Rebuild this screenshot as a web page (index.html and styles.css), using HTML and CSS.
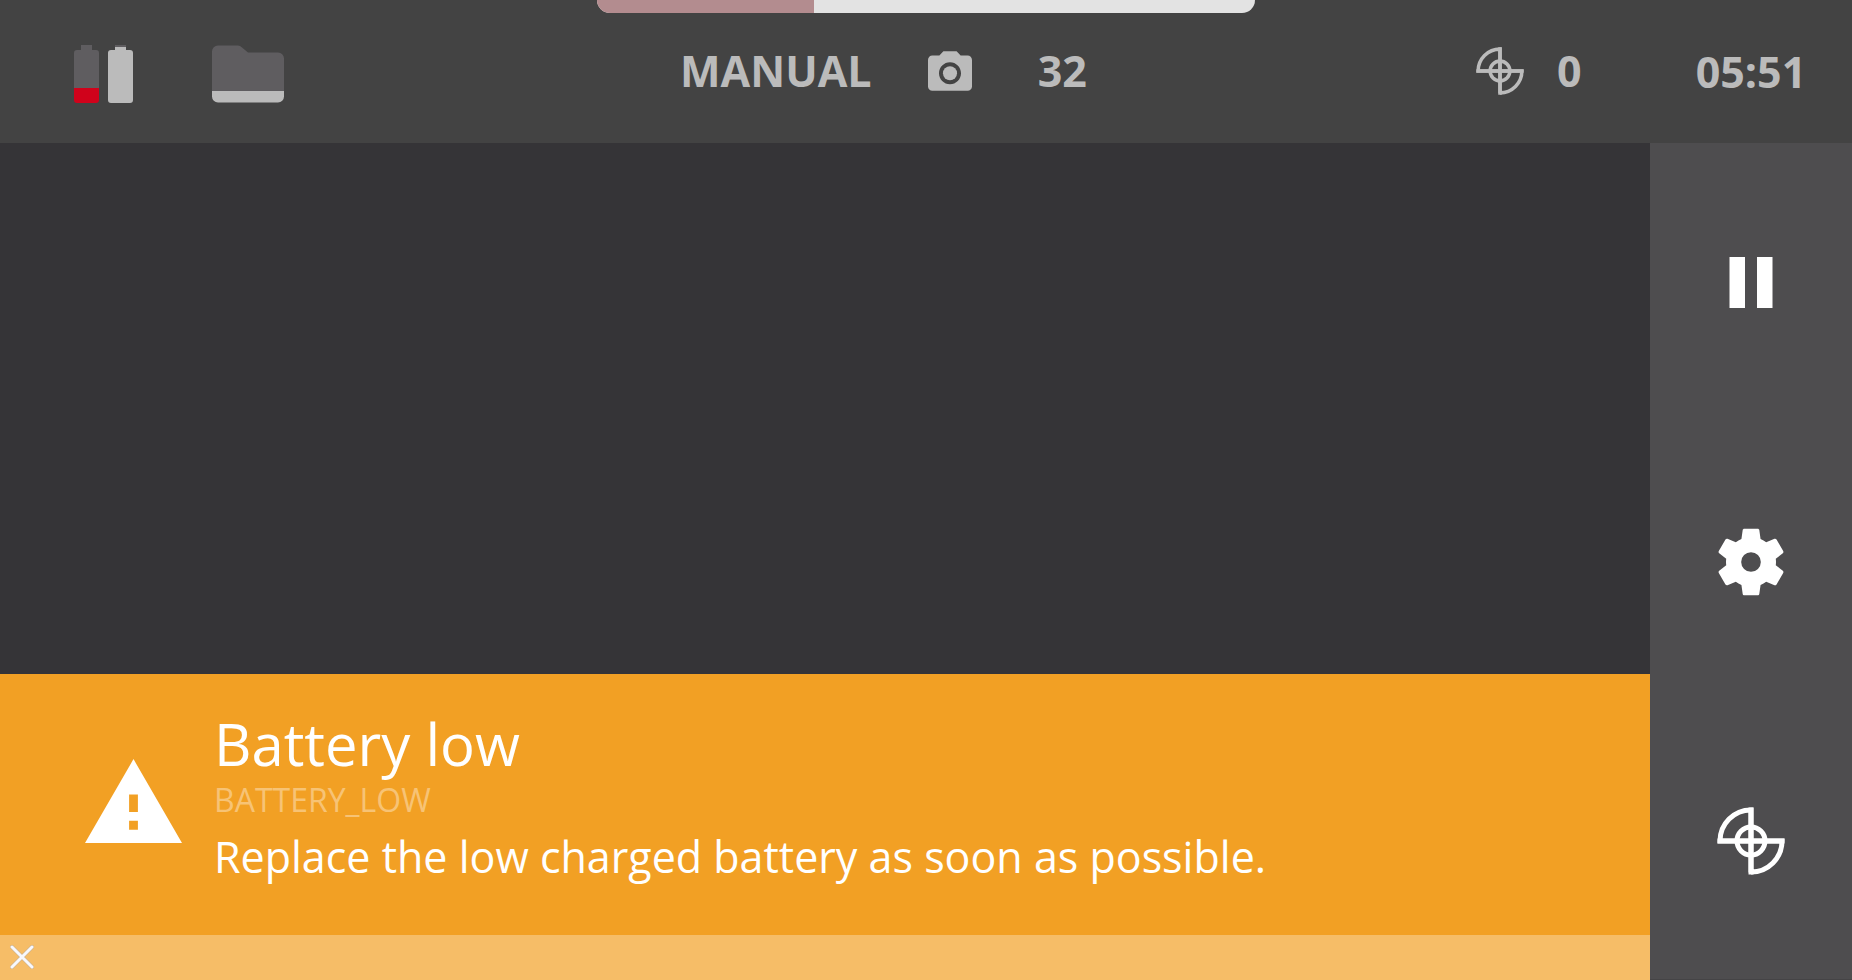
FILE: index.html
```html
<!DOCTYPE html>
<html lang="en">
<head>
<meta charset="utf-8">
<title>Camera control</title>
<link rel="stylesheet" href="styles.css">
</head>
<body>
<div class="app">
  <header class="topbar">
    <div class="storage">
      <svg class="batteries" viewBox="0 0 59 58" role="img" aria-label="Batteries">
        <path fill="#5f5d60" d="M7 0h11v5h4a3 3 0 0 1 3 3v36H0V8a3 3 0 0 1 3-3h4z"/>
        <path fill="#d0021b" d="M0 43h25v12a3 3 0 0 1-3 3H3a3 3 0 0 1-3-3z"/>
        <path fill="#5f5d60" d="M41 0h11v3H41z"/>
        <path fill="#bbb" d="M41 2h11v3h4a3 3 0 0 1 3 3v47a3 3 0 0 1-3 3H37a3 3 0 0 1-3-3V8a3 3 0 0 1 3-3h4z"/>
      </svg>
      <svg class="folder" viewBox="0 0 72 58" role="img" aria-label="Storage">
        <path fill="#5f5d60" d="M6 .5h20q2 0 4 2l6 5h30a6 6 0 0 1 6 6V46H0V6.500a6 6 0 0 1 6-6z"/>
        <path fill="#bbb" d="M0 46h72V51.500a6 6 0 0 1-6 6H6a6 6 0 0 1-6-6z"/>
      </svg>
    </div>
    <div class="capture">
      <span>MANUAL</span>
      <svg class="camera" viewBox="2 2 20 18" role="img" aria-label="Photos">
        <circle cx="12" cy="12" r="3.200"/>
        <path d="M9 2L7.170 4H4c-1.100 0-2 .9-2 2v12c0 1.100.9 2 2 2h16c1.100 0 2-.9 2-2V6c0-1.100-.9-2-2-2h-3.170L15 2H9zm3 15c-2.760 0-5-2.240-5-5s2.240-5 5-5 5 2.240 5 5-2.240 5-5 5z"/>
      </svg>
      <span>32</span>
    </div>
    <div class="targets">
      <svg class="target target-small" viewBox="0 0 68 68" role="img" aria-label="Targets">
        <path d="M34 65.500V3A31 31 0 0 0 3 34h62A31 31 0 0 1 34 65"/><path d="M34 .5V67.500M.5 34h67"/><circle cx="34" cy="34" r="14"/>
      </svg>
      <span>0</span>
    </div>
    <time class="clock">05:51</time>
  </header>
  <progress class="level" value="33" max="100" aria-label="Level"></progress>

  <main class="viewport">
    <section class="alert" role="alert">
      <div class="alert-body">
        <svg class="warning" viewBox="1 2 22 19" aria-hidden="true"><path d="M1 21h22L12 2 1 21zm12-3h-2v-2h2v2zm0-4h-2v-4h2v4z"/></svg>
        <div class="alert-text">
          <h1>Battery low</h1>
          <p class="code">BATTERY_LOW</p>
          <p class="message">Replace the low charged battery as soon as possible.</p>
        </div>
      </div>
      <div class="alert-footer">
        <button class="close" type="button" aria-label="Close">
          <svg viewBox="0 0 24 24"><path class="close-edge" d="M2 2l20 20M22 2L2 22"/><path d="M2 2l20 20M22 2L2 22"/></svg>
        </button>
      </div>
    </section>
  </main>

  <nav class="sidebar">
    <button type="button" aria-label="Pause">
      <svg class="pause" viewBox="0 0 44 51"><path d="M.5 0H16v51H.5zM28 0h15.500v51H28z"/></svg>
    </button>
    <button type="button" aria-label="Settings">
      <svg class="gear" viewBox="0 0 24 24"><path d="M19.430 12.980c.04-.32.07-.64.07-.98s-.03-.66-.07-.98l2.110-1.650c.19-.15.24-.42.12-.64l-2-3.460c-.12-.22-.39-.3-.61-.22l-2.490 1c-.52-.4-1.080-.73-1.690-.98l-.38-2.650C14.460 2.180 14.250 2 14 2h-4c-.25 0-.46.18-.49.42l-.38 2.650c-.61.25-1.170.59-1.690.98l-2.490-1c-.23-.09-.49 0-.61.22l-2 3.460c-.13.22-.07.49.12.64l2.110 1.650c-.04.32-.07.65-.07.98s.03.66.07.98l-2.110 1.650c-.19.15-.24.42-.12.64l2 3.460c.12.22.39.3.61.22l2.490-1c.52.4 1.080.73 1.690.98l.38 2.650c.03.24.24.42.49.42h4c.25 0 .46-.18.49-.42l.38-2.650c.61-.25 1.170-.59 1.690-.98l2.490 1c.23.09.49 0 .61-.22l2-3.460c.12-.22.07-.49-.12-.64l-2.110-1.650zM12 14.950a2.950 2.950 0 1 1 0-5.900 2.950 2.950 0 0 1 0 5.900z"/></svg>
    </button>
    <button type="button" aria-label="Target">
      <svg class="target" viewBox="0 0 68 68">
        <path d="M34 65.500V3A31 31 0 0 0 3 34h62A31 31 0 0 1 34 65"/><path d="M34 .5V67.500M.5 34h67"/><circle cx="34" cy="34" r="14"/>
      </svg>
    </button>
  </nav>
</div>
</body>
</html>
```

FILE: styles.css
```css
* {
  box-sizing: border-box;
}

body {
  margin: 0;
  background: #353437;
  font-family: "Open Sans", "Noto Sans", sans-serif;
}

h1,
p {
  margin: 0;
  font-weight: 400;
}

svg {
  display: block;
  flex: none;
}

button {
  border: 0;
  padding: 0;
  background: none;
  cursor: pointer;
}

.app {
  position: relative;
  display: grid;
  grid-template: auto 1fr / 1fr 202px;
  min-height: 100vh;
}

.topbar {
  grid-column: 1 / -1;
  display: grid;
  grid-template-columns: 680fr 796fr 174fr 202px;
  align-items: center;
  padding: 40px 0;
  background: #434343;
  color: #bbb;
  font-size: 43px;
  font-weight: 700;
  line-height: 61px;
}

.storage {
  display: flex;
  align-items: center;
  gap: 79px;
  padding: 5px 0 0 74px;
}

.batteries {
  width: 59px;
  height: 58px;
}

.folder {
  width: 72px;
  height: 58px;
}

.capture {
  display: flex;
  align-items: center;
  gap: 56px;
  padding-bottom: 2px;
}

.capture span + svg + span {
  padding-left: 10px;
}

.camera {
  width: 44px;
  height: 40px;
  fill: #bbb;
}

.targets {
  display: flex;
  align-items: center;
  gap: 33px;
  padding-bottom: 2px;
}

.target {
  width: 68px;
  height: 68px;
  fill: none;
  stroke: #fff;
  stroke-width: 5;
}

.target-small {
  width: 48px;
  height: 48px;
  stroke: #bbb;
}

.clock {
  text-align: center;
}

/* Overlays the top edge of the window */
.level {
  position: absolute;
  top: 0;
  left: 50%;
  width: 658px;
  height: 13px;
  transform: translateX(-50%);
  appearance: none;
  border: 0;
  border-radius: 0 0 13px 13px;
  overflow: hidden;
  background: #e3e3e3;
}

.level::-webkit-progress-bar {
  background: #e3e3e3;
}

.level::-webkit-progress-value {
  background: #b38c8f;
}

.viewport {
  display: flex;
  flex-direction: column;
  justify-content: flex-end;
  background: #353437;
}

.alert {
  background: #f2a024;
  color: #fff;
}

.alert-body {
  display: flex;
  align-items: center;
  gap: 32px;
  padding: 33px 85px 40px;
}

.warning {
  width: 97px;
  height: 84px;
  fill: #fff;
}

.alert-text h1 {
  font-size: 58px;
  line-height: 74px;
}

.code {
  color: #f7c375;
  font-size: 32px;
  line-height: 38px;
}

.message {
  font-size: 43px;
  line-height: 76px;
}

.alert-footer {
  display: flex;
  align-items: center;
  height: 45px;
  padding: 0 0 1px 10px;
  background: #f6bd67;
}

.close svg {
  width: 24px;
  height: 24px;
  stroke: #f8f8fc;
  stroke-width: 3;
  stroke-linecap: round;
}

.close .close-edge {
  stroke: #c9b190;
  stroke-width: 4;
}

.sidebar {
  display: grid;
  grid-template-rows: repeat(3, 1fr);
  background: #4e4d4f;
  box-shadow: inset 0 -1px #454446;
}

.sidebar button {
  display: grid;
  place-items: center;
}

.pause {
  width: 44px;
  height: 51px;
  fill: #fff;
}

.gear {
  width: 80px;
  height: 80px;
  fill: #fff;
}
```
